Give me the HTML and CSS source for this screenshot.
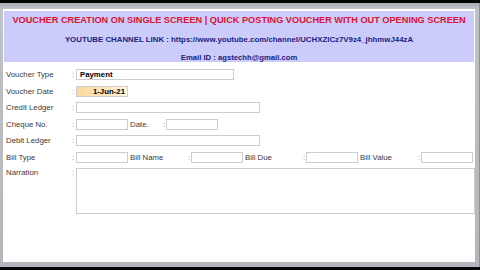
FILE: index.html
```html
<!DOCTYPE html>
<html>
<head>
<meta charset="utf-8">
<link rel="stylesheet" href="styles.css">
</head>
<body>
<div class="topbar"></div>
<div class="frame">
  <div class="panel">
    <div class="header">
      <div class="title">VOUCHER CREATION ON SINGLE SCREEN | QUICK POSTING VOUCHER WITH OUT OPENING SCREEN</div>
      <div class="link">YOUTUBE CHANNEL LINK : https://www.youtube.com/channel/UCHXZICz7V9z4_jhhmwJ44zA</div>
      <div class="email">Email ID : agstechh@gmail.com</div>
    </div>
    <div class="form">
      <div class="row">
        <span class="lbl">Voucher Type</span><span class="colon">:</span>
        <div class="box w-type"><b>Payment</b></div>
      </div>
      <div class="row">
        <span class="lbl">Voucher Date</span><span class="colon">:</span>
        <div class="box w-small date"><b>1-Jun-21</b></div>
      </div>
      <div class="row">
        <span class="lbl">Credit Ledger</span><span class="colon">:</span>
        <div class="box w-ledger"></div>
      </div>
      <div class="row">
        <span class="lbl">Cheque No.</span><span class="colon">:</span>
        <div class="box w-small"></div>
        <span class="lbl2 l-date">Date.</span><span class="colon2">:</span>
        <div class="box w-small"></div>
      </div>
      <div class="row">
        <span class="lbl">Debit Ledger</span><span class="colon">:</span>
        <div class="box w-ledger"></div>
      </div>
      <div class="row">
        <span class="lbl">Bill Type</span><span class="colon">:</span>
        <div class="box w-small"></div>
        <span class="lbl2 l-bill">Bill Name</span><span class="colon2">:</span>
        <div class="box w-small"></div>
        <span class="lbl2 l-bill">Bill Due</span><span class="colon2">:</span>
        <div class="box w-small"></div>
        <span class="lbl2 l-bill">Bill Value</span><span class="colon2">:</span>
        <div class="box w-small"></div>
      </div>
      <div class="row narr">
        <span class="lbl">Narration</span><span class="colon">:</span>
        <div class="box w-narr"></div>
      </div>
    </div>
  </div>
</div>
<div class="bottombar"></div>
</body>
</html>
```
FILE: styles.css
```css
html, body {
  margin: 0;
  padding: 0;
  width: 480px;
  height: 270px;
  overflow: hidden;
  background: #000;
  font-family: "Liberation Sans", Arial, sans-serif;
}
.topbar {
  height: 3px;
  background: #050505;
}
.frame {
  height: 264px;
  background: linear-gradient(#a9adb2, #bfc3c7 6px, #b3b7bb);
  padding: 6px 4px 5px 3px;
  box-sizing: border-box;
  border-right: 1px solid #8d9296;
}
.bottombar {
  height: 3px;
  background: #050505;
}
.panel {
  height: 100%;
  background: #fff;
  padding: 2px 0 0 1px;
  box-sizing: border-box;
}
.header {
  background: #ccccfb;
  height: 51px;
  margin-right: 1px;
  text-align: center;
  font-weight: bold;
  display: flex;
  flex-direction: column;
  align-items: center;
}
.title {
  color: #dc1230;
  font-size: 9.2px;
  line-height: 12px;
  margin-top: 3px;
  white-space: nowrap;
}
.link {
  color: #1c2180;
  font-size: 7.85px;
  line-height: 10px;
  margin-top: 9px;
  white-space: nowrap;
}
.email {
  color: #1c2180;
  font-size: 7.7px;
  line-height: 10px;
  margin-top: 8px;
  white-space: nowrap;
}
.form {
  padding-top: 7px;
  display: flex;
  flex-direction: column;
  gap: 5.5px;
}
.row {
  display: flex;
  align-items: center;
  height: 11px;
  font-size: 7.8px;
  color: #3a3a3a;
}
.row.narr {
  align-items: flex-start;
  height: 46px;
}
.lbl {
  width: 66px;
  padding-left: 2px;
  white-space: nowrap;
}
.colon {
  width: 4px;
  color: #888;
}
.colon2 {
  color: #888;
  width: 3px;
}
.lbl2 {
  white-space: nowrap;
  padding-left: 2px;
}
.l-date { width: 33px; }
.l-bill { width: 58px; }
.box {
  height: 11px;
  box-sizing: border-box;
  border: 1px solid #cdcdcd;
  background: #fff;
  color: #000;
  font-size: 7.8px;
  line-height: 9px;
  padding: 0 3px;
  white-space: nowrap;
}
.w-type { width: 158px; }
.w-small { width: 52px; }
.w-ledger { width: 184px; }
.w-narr { width: 399px; height: 46px; }
.date {
  background: linear-gradient(90deg, #fbd99e, #fde6bd 60%, #fff5e2);
  text-align: right;
  padding-right: 2px;
}
```
